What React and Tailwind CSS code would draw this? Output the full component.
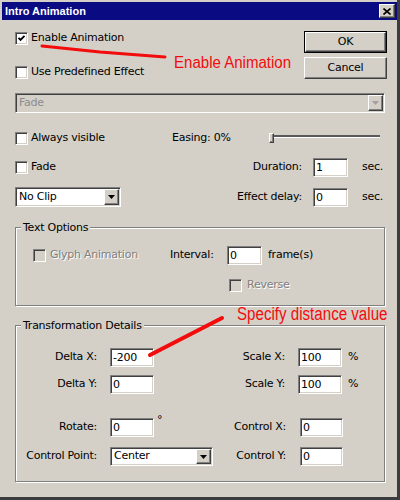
import React from 'react';

const sunken = "border border-t-[#808080] border-l-[#808080] border-r-white border-b-white shadow-[inset_1px_1px_0_#404040,inset_-1px_-1px_0_#d4d0c8]";
const raised = "border border-t-white border-l-white border-r-[#404040] border-b-[#404040] shadow-[inset_-1px_-1px_0_#808080,inset_1px_1px_0_#d4d0c8]";
const dim = "text-[#808080] [text-shadow:1px_1px_0_#fff]";

function Check({ checked, disabled }) {
  return (
    <div className={`w-[13px] h-[13px] shrink-0 flex items-center justify-center ${sunken} ${disabled ? 'bg-[#d4d0c8]' : 'bg-white'}`}>
      {checked && (
        <svg width="9" height="9" viewBox="0 0 9 9">
          <path d="M1.5 3.8l2 2 4-4" fill="none" stroke="#000" strokeWidth="1.9" />
        </svg>
      )}
    </div>
  );
}

function CheckRow({ label, checked, disabled, gap = 'ml-[3px]' }) {
  return (
    <div className="flex items-center h-[13px]">
      <Check checked={checked} disabled={disabled} />
      <span className={`${gap} whitespace-nowrap ${disabled ? dim : ''}`}>{label}</span>
    </div>
  );
}

function Field({ w, value }) {
  return (
    <div className={`h-[19px] ${w} shrink-0 bg-white ${sunken} flex items-center pl-[2px] leading-none`}>
      {value}
    </div>
  );
}

function Arrow({ disabled }) {
  return (
    <div className={`w-[15px] h-full shrink-0 bg-[#d4d0c8] ${raised} flex items-center justify-center`}>
      <svg width="7" height="4" viewBox="0 0 7 4">
        <path d="M0 0h7L3.5 4z" fill={disabled ? '#a0a0a0' : '#000'} />
      </svg>
    </div>
  );
}

function Select({ w, h, value, disabled }) {
  return (
    <div className={`${w} ${h} shrink-0 ${sunken} ${disabled ? 'bg-[#d4d0c8]' : 'bg-white'} flex items-stretch p-[1px]`}>
      <div className={`flex-1 flex items-center pl-[2px] ${disabled ? 'text-[#8c8c8c]' : ''}`}>{value}</div>
      <Arrow disabled={disabled} />
    </div>
  );
}

function Slider() {
  return (
    <div className="relative w-[108px] h-[12px]">
      <div className="mt-[3px] h-[3px] border-t-2 border-t-[#5a5a5a] border-b border-b-white" />
      <div className={`absolute left-[-3px] top-[1px] w-[5px] h-[10px] bg-[#d4d0c8] ${raised}`} />
    </div>
  );
}

function Legend({ children }) {
  return <legend className="ml-[5px] px-[2px] leading-[13px] bg-[#d4d0c8]">{children}</legend>;
}

export default function App() {
  return (
    <div className="relative w-[400px] h-[500px] bg-[#d4d0c8] pl-[2px] pt-[2px] border-r-[3px] border-b-[3px] border-r-[#3c3c3c] border-b-[#3c3c3c] font-['DejaVu_Sans',sans-serif] text-[11px] tracking-[-0.25px] text-black overflow-hidden">
      {/* title bar */}
      <div className="h-[18px] bg-[#0a0a82] flex items-center justify-between pl-[3px] pr-[2px]">
        <span className="font-['Liberation_Sans',Arial,sans-serif] font-bold text-[11px] tracking-normal text-white">Intro Animation</span>
        <div className={`w-[16px] h-[14px] bg-[#d4d0c8] ${raised} flex items-center justify-center`}>
          <svg width="8" height="7" viewBox="0 0 8 7">
            <path d="M0.5 0.5l7 6M7.5 0.5l-7 6" stroke="#000" strokeWidth="1.6" />
          </svg>
        </div>
      </div>

      <div className="pl-[13px] w-[385px]">
        {/* top row */}
        <div className="pt-[11px] flex justify-between">
          <div className="pt-[1px]">
            <CheckRow label="Enable Animation" checked />
            <div className="mt-[21px]">
              <CheckRow label="Use Predefined Effect" />
            </div>
          </div>
          <div className="flex flex-col gap-[4px]">
            <div className="w-[83px] h-[22px] border border-black">
              <div className={`h-full bg-[#d4d0c8] ${raised} flex items-center justify-center`}>OK</div>
            </div>
            <div className={`w-[83px] h-[22px] bg-[#d4d0c8] ${raised} flex items-center justify-center`}>Cancel</div>
          </div>
        </div>

        <div className="mt-[14px]">
          <Select w="w-[370px]" h="h-[20px]" value="Fade" disabled />
        </div>

        <div className="mt-[15px] h-[20px] flex items-center">
          <div className="w-[157px]">
            <CheckRow label="Always visible" />
          </div>
          <span className="w-[100px]">Easing: 0%</span>
          <Slider />
        </div>

        <div className="mt-[9px] h-[20px] flex items-center">
          <CheckRow label="Fade" />
          <div className="ml-auto flex items-center">
            <span>Duration:</span>
            <div className="ml-[11px]"><Field w="w-[35px]" value="1" /></div>
            <span className="ml-[14px] w-[25px]">sec.</span>
          </div>
        </div>

        <div className="mt-[10px] h-[20px] flex items-center">
          <Select w="w-[106px]" h="h-[20px]" value="No Clip" />
          <div className="ml-auto flex items-center">
            <span>Effect delay:</span>
            <div className="ml-[11px]"><Field w="w-[35px]" value="0" /></div>
            <span className="ml-[14px] w-[25px]">sec.</span>
          </div>
        </div>

        <fieldset className="mt-[14px] w-[370px] border border-[#808080] shadow-[inset_1px_1px_0_#fff,1px_1px_0_#fff] pt-[12px] pb-[10px]">
          <Legend>Text Options</Legend>
          <div className="h-[19px] flex items-center pl-[17px]">
            <div className="w-[137px]">
              <CheckRow label="Glyph Animation" disabled gap="ml-[4px]" />
            </div>
            <span className="w-[57px]">Interval:</span>
            <Field w="w-[35px]" value="0" />
            <span className="ml-[6px]">frame(s)</span>
          </div>
          <div className="mt-[11px] h-[19px] flex items-center pl-[213px]">
            <CheckRow label="Reverse" disabled gap="ml-[5px]" />
          </div>
        </fieldset>

        <fieldset className="mt-[13px] w-[370px] border border-[#808080] shadow-[inset_1px_1px_0_#fff,1px_1px_0_#fff] pt-[16px] pb-[15px]">
          <Legend>Transformation Details</Legend>

          <div className="h-[19px] flex items-center">
            <div className="w-[197px] flex items-center">
              <span className="w-[81px] text-right">Delta X:</span>
              <div className="ml-[13px]"><Field w="w-[44px]" value="-200" /></div>
            </div>
            <span className="w-[72px] text-right">Scale X:</span>
            <div className="ml-[13px]"><Field w="w-[44px]" value="100" /></div>
            <span className="ml-[6px]">%</span>
          </div>

          <div className="mt-[8px] h-[19px] flex items-center">
            <div className="w-[197px] flex items-center">
              <span className="w-[81px] text-right">Delta Y:</span>
              <div className="ml-[13px]"><Field w="w-[44px]" value="0" /></div>
            </div>
            <span className="w-[72px] text-right">Scale Y:</span>
            <div className="ml-[13px]"><Field w="w-[44px]" value="100" /></div>
            <span className="ml-[6px]">%</span>
          </div>

          <div className="mt-[24px] h-[19px] flex items-center">
            <div className="w-[197px] flex items-center">
              <span className="w-[81px] text-right">Rotate:</span>
              <div className="ml-[13px]"><Field w="w-[44px]" value="0" /></div>
              <span className="self-start -mt-[4px] ml-[3px] leading-none">°</span>
            </div>
            <span className="w-[73px] text-right">Control X:</span>
            <div className="ml-[14px]"><Field w="w-[43px]" value="0" /></div>
          </div>

          <div className="mt-[10px] h-[19px] flex items-center">
            <div className="w-[197px] flex items-center">
              <span className="w-[81px] text-right">Control Point:</span>
              <div className="ml-[13px]"><Select w="w-[103px]" h="h-[19px]" value="Center" /></div>
            </div>
            <span className="w-[73px] text-right">Control Y:</span>
            <div className="ml-[14px]"><Field w="w-[43px]" value="0" /></div>
          </div>
        </fieldset>
      </div>

      {/* red annotations */}
      <svg className="absolute left-0 top-0 pointer-events-none" width="400" height="500" viewBox="0 0 400 500">
        <path d="M42 46 L100 52 L165 57" stroke="#f20c0c" strokeWidth="3" strokeLinecap="round" fill="none" />
        <path d="M150 355 L222 318" stroke="#f20c0c" strokeWidth="4" strokeLinecap="round" fill="none" />
      </svg>
      <div className="absolute left-[174px] top-[55px] font-['Liberation_Sans',Arial,sans-serif] text-[16px] leading-none tracking-normal text-[#f20c0c] scale-x-[0.94] origin-left whitespace-nowrap">
        Enable Animation
      </div>
      <div className="absolute left-[237px] top-[305px] font-['Liberation_Sans',Arial,sans-serif] text-[18px] leading-none tracking-normal text-[#f20c0c] scale-x-[0.84] origin-left whitespace-nowrap">
        Specify distance value
      </div>
    </div>
  );
}
